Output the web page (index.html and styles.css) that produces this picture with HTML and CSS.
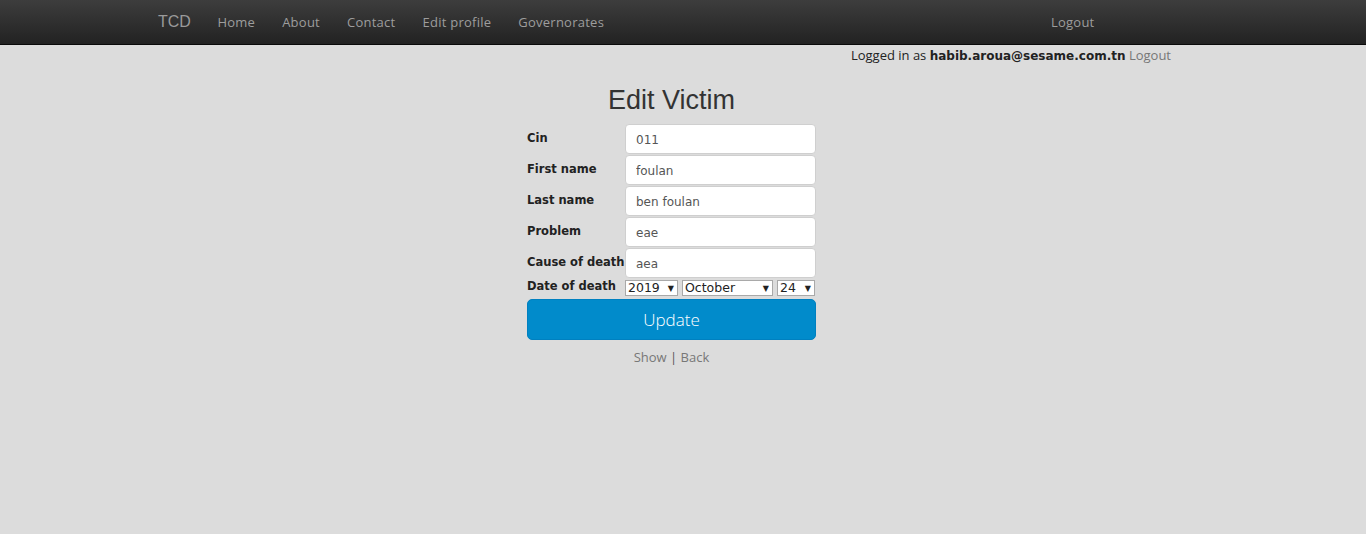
FILE: index.html
```html
<!DOCTYPE html>
<html>
<head>
<meta charset="utf-8">
<title>Edit Victim</title>
<link rel="stylesheet" href="styles.css">
</head>
<body>
<header class="navbar">
  <div class="nav-inner">
    <a class="brand" href="#">TCD</a>
    <nav class="nav-links">
      <a href="#">Home</a>
      <a href="#">About</a>
      <a href="#">Contact</a>
      <a href="#">Edit profile</a>
      <a href="#">Governorates</a>
    </nav>
    <a class="nav-logout" href="#">Logout</a>
  </div>
</header>
<div class="userbar">
  <span>Logged in as <b>habib.aroua@sesame.com.tn</b> <a href="#">Logout</a></span>
</div>
<main class="page">
  <h1>Edit Victim</h1>
  <form class="form">
    <div class="row"><label>Cin</label><input type="text" value="011"></div>
    <div class="row"><label>First name</label><input type="text" value="foulan"></div>
    <div class="row"><label>Last name</label><input type="text" value="ben foulan"></div>
    <div class="row"><label>Problem</label><input type="text" value="eae"></div>
    <div class="row"><label>Cause of death</label><input type="text" value="aea"></div>
    <div class="row date-row"><label>Date of death</label>
      <div class="selects">
        <span class="sel s-year"><select><option>2019</option></select></span>
        <span class="sel s-month"><select><option>October</option></select></span>
        <span class="sel s-day"><select><option>24</option></select></span>
      </div>
    </div>
    <button type="button" class="btn">Update</button>
  </form>
  <div class="links"><a href="#">Show</a> | <a href="#">Back</a></div>
</main>
</body>
</html>
```

FILE: styles.css
```css
html, body {
  margin: 0;
  padding: 0;
  background: #dcdcdc;
  height: 100%;
}
body {
  font-family: "Open Sans", "DejaVu Sans", sans-serif;
  color: #333;
}
a { text-decoration: none; }

.navbar {
  height: 44px;
  background: linear-gradient(#3d3d3d, #222222);
  border-bottom: 1px solid #0a0a0a;
}
.nav-inner {
  display: flex;
  align-items: center;
  height: 44px;
  padding-left: 158px;
}
.brand {
  color: #9a9a9a;
  font-family: "Liberation Sans", sans-serif;
  font-size: 16px;
  margin-right: 13px;
}
.nav-links { display: flex; }
.nav-links a, .nav-logout {
  color: #9d9d9d;
  font-size: 13px;
  letter-spacing: 0.25px;
  padding: 0 13.5px;
}
.nav-logout { margin-left: auto; margin-right: 258px; }

.userbar {
  display: flex;
  justify-content: flex-end;
  padding-right: 195px;
  font-size: 13px;
  line-height: 20px;
  color: #222;
  height: 20px;
}
.userbar b { font-family: "DejaVu Sans", sans-serif; font-size: 12px; }
.userbar a { color: #777; }

.page {
  width: 289px;
  margin-left: calc(50% - 156px);
}
h1 {
  font-family: "Liberation Sans", Arial, sans-serif;
  font-weight: normal;
  font-size: 27px;
  text-align: center;
  margin: 19px 0 8px;
  line-height: 32px;
  color: #333;
}
.form { display: flex; flex-direction: column; }
.row {
  display: flex;
  height: 31px;
}
.row label {
  width: 98px;
  font-family: "DejaVu Sans", sans-serif;
  font-weight: bold;
  font-size: 11.5px;
  color: #222;
  padding-top: 7px;
  box-sizing: border-box;
  white-space: nowrap;
}
.row input {
  width: 191px;
  height: 30px;
  box-sizing: border-box;
  border: 1px solid #cfcfcf;
  border-radius: 4px;
  background: #fff;
  padding: 2px 10px 0;
  font-family: "DejaVu Sans", sans-serif;
  font-size: 12px;
  color: #555;
  outline: none;
}
.date-row { height: 20px; }
.date-row label { padding-top: 0; }
.selects { display: flex; gap: 4px; padding-top: 1px; }
.sel {
  position: relative;
  display: block;
  height: 16px;
}
.sel select {
  -webkit-appearance: none;
  appearance: none;
  display: block;
  width: 100%;
  height: 16px;
  box-sizing: border-box;
  font-family: "DejaVu Sans", sans-serif;
  font-size: 12.5px;
  line-height: 14px;
  color: #222;
  border: 1px solid #a9a9a9;
  background: #fff;
  padding: 0 2px;
  margin: 0;
  border-radius: 0;
}
.sel::after {
  content: "\25BC";
  position: absolute;
  right: 4px;
  top: 3px;
  font-size: 8px;
  line-height: 10px;
  color: #222;
  pointer-events: none;
}
.s-year { width: 53px; }
.s-month { width: 91px; }
.s-day { width: 38px; }

.btn {
  margin: 0;
  height: 41px;
  width: 289px;
  border: 1px solid #0080c0;
  border-radius: 5px;
  background: #018bcb;
  color: #fff;
  font-family: "Open Sans", sans-serif;
  font-weight: 300;
  font-size: 17px;
  cursor: pointer;
}
.links {
  text-align: center;
  margin-top: 8px;
  font-size: 13px;
  color: #555;
}
.links a { color: #777; }
```
